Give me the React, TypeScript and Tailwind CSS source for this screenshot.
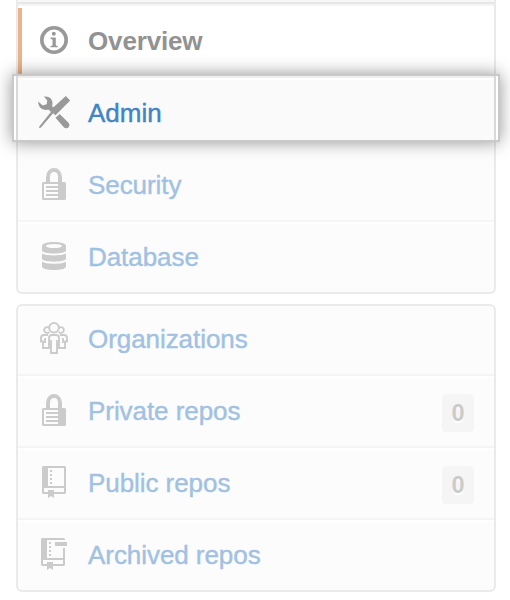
import type { ReactNode } from "react";

function Icon({ children }: { children: ReactNode }) {
  return (
    <svg width="44" height="44" viewBox="0 0 44 44" className="shrink-0" fill="currentColor">
      {children}
    </svg>
  );
}

const InfoIcon = () => (
  <Icon>
    <circle cx="22" cy="22" r="12.200" fill="none" stroke="currentColor" strokeWidth="3.600" />
    <circle cx="21.800" cy="15.700" r="2" />
    <path d="M18.500 19.500h5.300V27q0 1 2 1v1.300h-7.300V28q2 0 2-1v-5q0-1-2-1z" />
  </Icon>
);

const ToolsIcon = () => (
  <Icon>
    <path d="M12 6.500c5-.800 9 2.500 8.500 7.500l-.500 2 2.500 2.500-3.500 3.500-2.500-2.500c-5 1.500-10.500-1.500-10.300-8l4.500 4 4-1.200.5-3.700z" />
    <path d="M33.800 6l4.400 4.400-14.700 14.800-2.400-2L9 37.500l-2 .800.500-2L19.300 21.500l-.8-1.500z" />
    <path d="M23.500 27.800l4.200-3.800 8.800 8.800c1.500 1.500 1 3.400 0 4.400s-3.200 1.600-4.700 0z" />
  </Icon>
);

const LockIcon = () => (
  <Icon>
    <path d="M16 21v-6c0-9.300 12-9.300 12 0v6" fill="none" stroke="currentColor" strokeWidth="4" />
    <rect x="10" y="20" width="24" height="18" rx="1.500" />
    <path d="M12 22h14v14H12z" fill="#fcfcfc" />
    <path d="M14 24h12v2H14zM14 28h12v2H14zM14 32h12v2H14z" />
  </Icon>
);

const DatabaseIcon = () => (
  <Icon>
    <path d="M10 12c0-5.300 24-5.300 24 0v4.500c0 4-24 4-24 0z" />
    <ellipse cx="22" cy="12" rx="8" ry="2" fill="#fcfcfc" />
    <path d="M10 19.200c3 3 21 3 24 0v5.300c0 4.200-24 4.200-24 0z" />
    <path d="M10 27.500c3 3 21 3 24 0v5c0 4.700-24 4.700-24 0z" />
  </Icon>
);

const OrganizationIcon = () => (
  <Icon>
    <g fill="none" stroke="currentColor" strokeWidth="1.900">
      <circle cx="22" cy="11.800" r="4.800" />
      <path d="M17.200 12a2.900 2.900 0 1 0 0 4M26.800 12a2.900 2.900 0 1 1 0 4" />
      <path d="M19 24v13h6V24" />
      <path d="M19 28h-2v-6q0-3 3-3h4q3 0 3 3v6h-2" />
      <path d="M16 19h-4q-3 0-3 3v3.500h2V32h6v-4M28 19h4q3 0 3 3v3.500h-2V32h-6v-4M13 22v5M31 22v5" />
    </g>
  </Icon>
);

const RepoIcon = () => (
  <Icon>
    <path fillRule="evenodd" d="M11 6h22l1 1v26l-1 1H22v4l-3-2-3 2v-4h-5l-1-1V7zM16 8v18h16V8zM12 28v4h4v-2h6v2h10v-4z" />
    <path d="M18 10h2v2h-2zM18 14h2v2h-2zM18 18h2v2h-2zM18 22h2v2h-2z" />
  </Icon>
);

const ArchiveIcon = () => (
  <Icon>
    <path fillRule="evenodd" d="M10 6h22l1 1v1H15v18h16V16h2v17l-1 1H21v4l-3-2-3 2v-4h-5l-1-1V7zM11 28v4h4v-2h6v2h10v-4z" />
    <path d="M17 10h2v2h-2zM17 14h2v2h-2zM17 18h2v2h-2zM17 22h2v2h-2zM23 10h12v4H23z" />
  </Icon>
);

type RowProps = { icon: ReactNode; label: string; count?: number; className: string };

function Row({ icon, label, count, className }: RowProps) {
  return (
    <a className={`flex items-center pl-[14px] pr-5 text-[#cbcbcb] ${className}`}>
      {icon}
      <span className="ml-3 mt-0.5 flex-1 text-[26px] leading-[30px] tracking-[-0.06px] text-[#a1c1e3] [-webkit-text-stroke:0.4px_#a1c1e3]">
        {label}
      </span>
      {count !== undefined && (
        <span className="mt-1.5 flex h-[38px] w-8 items-center justify-center rounded-[4px] bg-[#f5f5f5] text-[23.500px] font-bold leading-[38px] [text-shadow:0_2px_0_#fff]">
          {count}
        </span>
      )}
    </a>
  );
}

export default function App() {
  return (
    <main className="h-[600px] w-[510px] overflow-hidden bg-white font-['Liberation_Sans',Arial,sans-serif]">
      <nav className="ml-4 mr-[14px] h-[294px] rounded-b-[6px] border-x-2 border-b-2 border-[#eaeaea] bg-[#fcfcfc]">
        <div className="h-1.5 border-b-2 border-[#f5f5f5] bg-[#f7f7f7] pt-0.5">
          <div className="h-0.5 bg-[#e6e6e6]" />
        </div>
        <div className="h-[68px] bg-white pt-0.5">
          <a className="flex h-[66px] items-center border-l-4 border-[#ebb387] pb-0.5 pl-[10px] text-[#999]">
            <InfoIcon />
            <span className="ml-3 mt-0.5 text-[26px] font-bold leading-[30px] tracking-[-0.15px] text-[#929292]">Overview</span>
          </a>
        </div>
        <div className="relative z-10 -mx-1.5 h-[68px] border-2 border-[#c9c9c9] bg-white px-0.5 shadow-[0_0_16px_rgba(0,0,0,0.42)]">
          <a className="flex h-16 items-center border-x-2 border-x-[#d9d9d9] bg-[#fafafa] pl-[14px] text-[#999] shadow-[inset_0_2px_#eee,inset_0_4px_#fff]">
            <div className="mt-2">
              <ToolsIcon />
            </div>
            <span className="ml-3 mt-2.5 text-[26px] leading-[30px] text-[#4183c4] [-webkit-text-stroke:0.4px_#4183c4]">Admin</span>
          </a>
        </div>
        <Row icon={<LockIcon />} label="Security" className="h-20 border-b-2 border-[#f5f5f5] pt-1.5" />
        <Row icon={<DatabaseIcon />} label="Database" className="h-[70px] border-t-2 border-white pb-1" />
      </nav>

      <nav className="ml-4 mr-[14px] mt-[10px] h-[288px] rounded-[6px] border-2 border-[#eaeaea] bg-[#fcfcfc]">
        <Row icon={<OrganizationIcon />} label="Organizations" className="h-[70px] border-b-2 border-[#f5f5f5] pb-1" />
        <Row icon={<LockIcon />} label="Private repos" count={0} className="h-[72px] border-b-2 border-t-2 border-b-[#f5f5f5] border-t-white pb-1" />
        <Row icon={<RepoIcon />} label="Public repos" count={0} className="h-[72px] border-b-2 border-t-2 border-b-[#f5f5f5] border-t-white pb-1" />
        <Row icon={<ArchiveIcon />} label="Archived repos" className="h-[70px] border-t-2 border-white pb-1" />
      </nav>
    </main>
  );
}
